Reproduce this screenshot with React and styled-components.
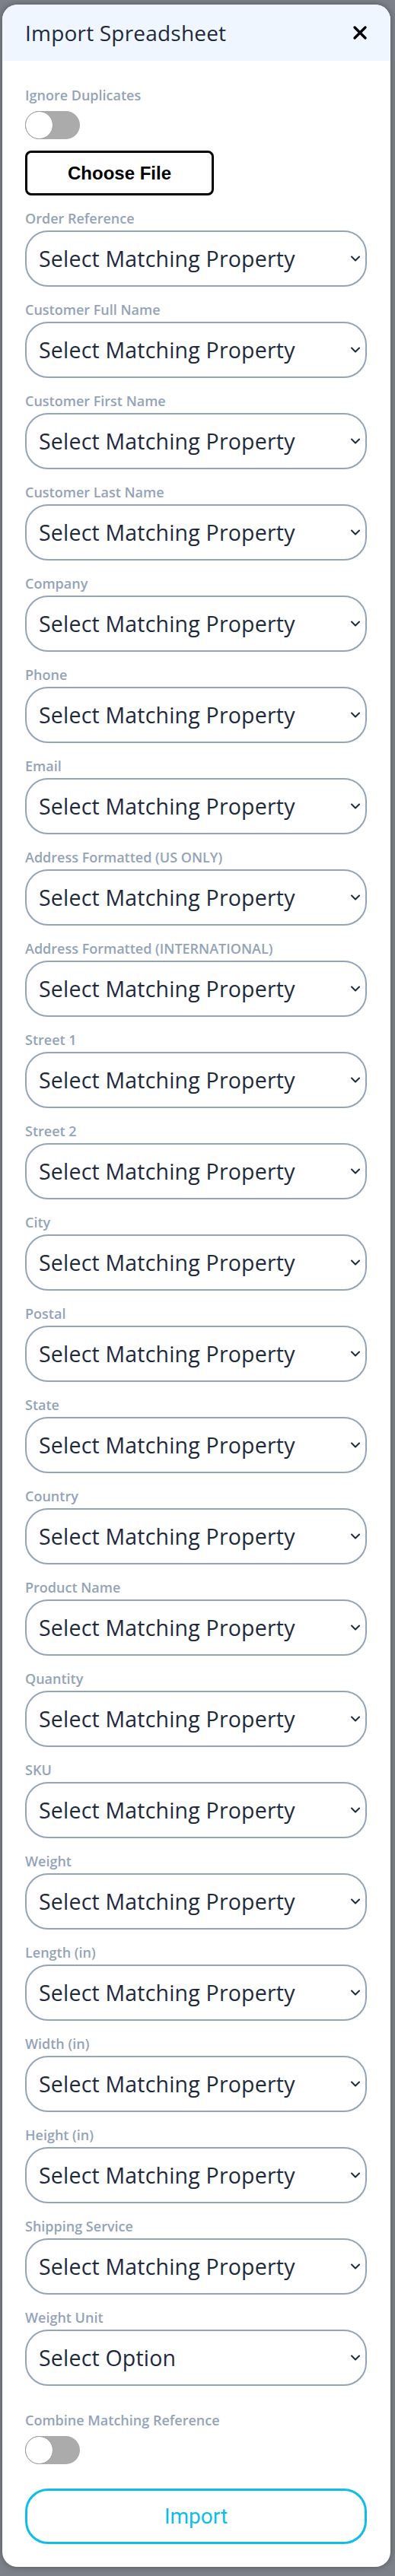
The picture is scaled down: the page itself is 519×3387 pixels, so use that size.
import React, { useState } from 'react';
import styled, { createGlobalStyle } from 'styled-components';

const GlobalStyle = createGlobalStyle`
  html, body {
    margin: 0;
    padding: 0;
    background: #7d828a;
  }
  * {
    box-sizing: border-box;
  }
`;

const fields = [
  'Order Reference',
  'Customer Full Name',
  'Customer First Name',
  'Customer Last Name',
  'Company',
  'Phone',
  'Email',
  'Address Formatted (US ONLY)',
  'Address Formatted (INTERNATIONAL)',
  'Street 1',
  'Street 2',
  'City',
  'Postal',
  'State',
  'Country',
  'Product Name',
  'Quantity',
  'SKU',
  'Weight',
  'Length (in)',
  'Width (in)',
  'Height (in)',
  'Shipping Service',
];

const Chevron = () => (
  <ChevronIcon width="14" height="9" viewBox="0 0 14 9" fill="none">
    <path
      d="M2 2l5 5 5-5"
      stroke="#1e293b"
      strokeWidth="2"
      strokeLinecap="round"
      strokeLinejoin="round"
    />
  </ChevronIcon>
);

const Toggle = ({ on, onClick }) => (
  <Track $on={on} onClick={onClick}>
    <Knob $on={on} />
  </Track>
);

const App = () => {
  const [ignoreDupes, setIgnoreDupes] = useState(false);
  const [combine, setCombine] = useState(false);

  return (
    <>
      <GlobalStyle />
      <Overlay>
        <Modal>
          <Header>
            <Title>Import Spreadsheet</Title>
            <CloseButton aria-label="Close">
              <svg width="20" height="20" viewBox="0 0 20 20">
                <path
                  d="M3 3l14 14M17 3L3 17"
                  stroke="#000"
                  strokeWidth="3.4"
                  strokeLinecap="round"
                />
              </svg>
            </CloseButton>
          </Header>

          <Body>
            <Label>Ignore Duplicates</Label>
            <Toggle on={ignoreDupes} onClick={() => setIgnoreDupes(!ignoreDupes)} />
            <FileButton>Choose File</FileButton>

            <FieldList>
              {fields.map((name) => (
                <Field key={name}>
                  <FieldLabel>{name}</FieldLabel>
                  <SelectWrap>
                    <Select defaultValue="">
                      <option value="">Select Matching Property</option>
                    </Select>
                    <Chevron />
                  </SelectWrap>
                </Field>
              ))}
              <Field>
                <FieldLabel>Weight Unit</FieldLabel>
                <SelectWrap>
                  <Select defaultValue="">
                    <option value="">Select Option</option>
                    <option value="lb">lb</option>
                    <option value="oz">oz</option>
                    <option value="kg">kg</option>
                  </Select>
                  <Chevron />
                </SelectWrap>
              </Field>
            </FieldList>

            <CombineLabel>Combine Matching Reference</CombineLabel>
            <Toggle on={combine} onClick={() => setCombine(!combine)} />
            <ImportButton>Import</ImportButton>
          </Body>
        </Modal>
      </Overlay>
    </>
  );
};

const Overlay = styled.div`
  padding: 6px 6px 13px 3px;
  font-family: 'Open Sans', 'Noto Sans', sans-serif;
`;

const Modal = styled.div`
  width: 510px;
  background: #ffffff;
  border-radius: 20px;
  overflow: hidden;
  box-shadow: 0 0 10px rgba(0, 0, 0, 0.35);
`;

const Header = styled.div`
  height: 74px;
  background: #eff6ff;
  display: flex;
  align-items: center;
  justify-content: space-between;
  padding: 0 30px;
`;

const Title = styled.h2`
  margin: 0;
  font-size: 28px;
  font-weight: 500;
  letter-spacing: 0.2px;
  color: #1e293b;
`;

const CloseButton = styled.button`
  border: none;
  background: none;
  padding: 0;
  display: flex;
  cursor: pointer;
`;

const Body = styled.div`
  padding: 33px 31px 30px 30px;
  display: flex;
  flex-direction: column;
  align-items: flex-start;
`;

const Label = styled.div`
  font-size: 18px;
  line-height: 24px;
  font-weight: 600;
  color: #94a3b8;
  margin-bottom: 9px;
`;

const CombineLabel = styled(Label)`
  margin-top: 33px;
`;

const Track = styled.div`
  width: 72px;
  height: 37px;
  border-radius: 19px;
  background: ${(p) => (p.$on ? '#10bde6' : '#ababab')};
  position: relative;
  cursor: pointer;
  flex-shrink: 0;
`;

const Knob = styled.div`
  position: absolute;
  top: 0;
  left: ${(p) => (p.$on ? '35px' : '0')};
  width: 37px;
  height: 37px;
  border-radius: 50%;
  background: #ffffff;
  border: 1px solid #9a9a9a;
`;

const FileButton = styled.button`
  margin-top: 15px;
  width: 248px;
  height: 59px;
  border: 3px solid #000;
  border-radius: 8px;
  background: #fff;
  font-family: 'Liberation Sans', Arial, sans-serif;
  font-size: 24px;
  font-weight: 700;
  color: #000;
  cursor: pointer;
`;

const FieldList = styled.div`
  margin-top: 18px;
  width: 100%;
  display: flex;
  flex-direction: column;
  gap: 18px;
`;

const Field = styled.div`
  display: flex;
  flex-direction: column;
  gap: 4px;
`;

const FieldLabel = styled.label`
  font-size: 18px;
  line-height: 24px;
  font-weight: 600;
  color: #94a3b8;
`;

const SelectWrap = styled.div`
  position: relative;
  width: 100%;
`;

const Select = styled.select`
  appearance: none;
  width: 100%;
  height: 74px;
  border: 2.5px solid #94a3b8;
  border-radius: 30px;
  background: #fff;
  padding: 0 40px 0 16px;
  font-family: 'Open Sans', 'Noto Sans', sans-serif;
  font-size: 28.5px;
  font-weight: 500;
  letter-spacing: 0.2px;
  color: #1e293b;
  outline: none;
  cursor: pointer;
`;

const ChevronIcon = styled.svg`
  position: absolute;
  right: 8px;
  top: 50%;
  transform: translateY(-50%);
  pointer-events: none;
`;

const ImportButton = styled.button`
  margin-top: 32px;
  width: 100%;
  height: 73px;
  border: 3px solid #10bde6;
  border-radius: 30px;
  background: #fff;
  font-family: Roboto, 'Liberation Sans', sans-serif;
  font-size: 28px;
  font-weight: 400;
  color: #10bde6;
  cursor: pointer;
`;

export default App;
